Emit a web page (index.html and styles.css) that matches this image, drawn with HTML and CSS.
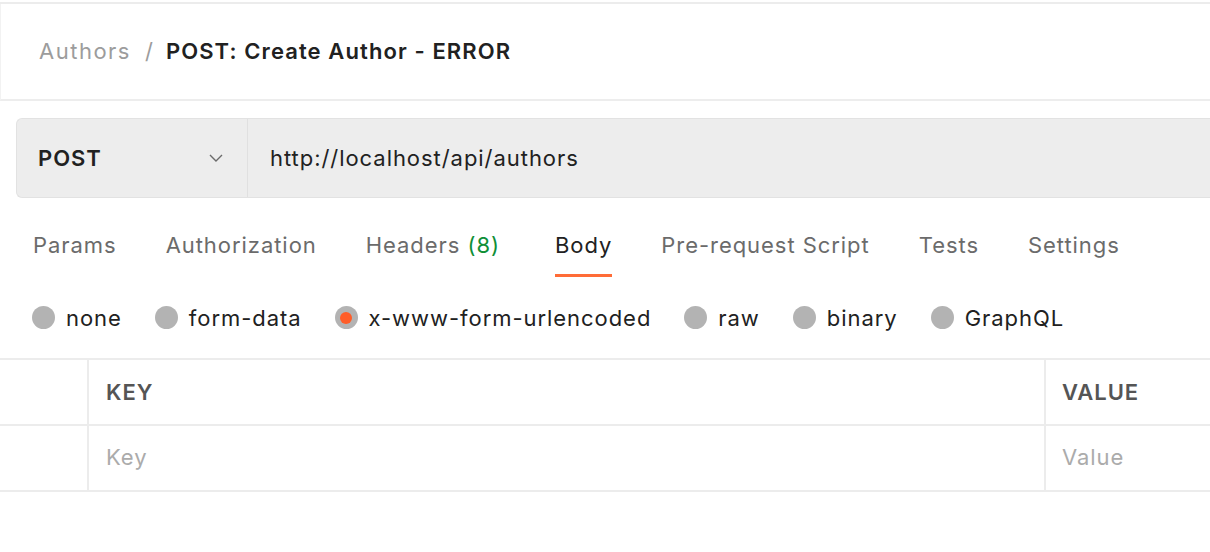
FILE: index.html
```html
<!DOCTYPE html>
<html>
<head>
<meta charset="utf-8">
<link rel="stylesheet" href="styles.css">
</head>
<body>
<div class="page">
  <header class="crumbs">
    <span class="crumb-parent">Authors</span>
    <span class="crumb-sep">/</span>
    <span class="crumb-title">POST: Create Author - ERROR</span>
  </header>
  <div class="request">
    <div class="method">
      <span class="method-name">POST</span>
      <svg class="chev" width="14" height="8" viewBox="0 0 14 8"><path d="M1 1 L7 7 L13 1" fill="none" stroke="#6b6b6b" stroke-width="1.4"/></svg>
    </div>
    <div class="url">http://localhost/api/authors</div>
  </div>
  <nav class="tabs">
    <span class="tab">Params</span>
    <span class="tab">Authorization</span>
    <span class="tab">Headers <span class="count">(8)</span></span>
    <span class="tab active">Body</span>
    <span class="tab">Pre-request Script</span>
    <span class="tab">Tests</span>
    <span class="tab">Settings</span>
  </nav>
  <div class="radios">
    <span class="radio"><span class="dot"></span>none</span>
    <span class="radio"><span class="dot"></span>form-data</span>
    <span class="radio"><span class="dot on"></span>x-www-form-urlencoded</span>
    <span class="radio"><span class="dot"></span>raw</span>
    <span class="radio"><span class="dot"></span>binary</span>
    <span class="radio"><span class="dot"></span>GraphQL</span>
  </div>
  <div class="table">
    <div class="row head">
      <div class="cell check"></div>
      <div class="cell key">KEY</div>
      <div class="cell value">VALUE</div>
    </div>
    <div class="row">
      <div class="cell check"></div>
      <div class="cell key ph">Key</div>
      <div class="cell value ph">Value</div>
    </div>
  </div>
</div>
</body>
</html>
```
FILE: styles.css
```css
* { box-sizing: border-box; }
html, body { margin: 0; padding: 0; background: #fff; }
body {
  font-family: Inter, "Noto Sans", sans-serif;
  font-size: 22px;
  letter-spacing: 0.95px;
  width: 1210px; height: 552px; overflow: hidden;
}
.page {
  border-top: 2px solid #ececec;
  margin-top: 2px;
}
.crumbs {
  height: 97px;
  border-bottom: 2px solid #ededed;
  border-left: 1px solid #f2f2f2;
  display: flex;
  align-items: center;
  padding-left: 38px;
  padding-bottom: 2px;
}
.crumb-parent { color: #9c9c9c; letter-spacing: 1.5px; }
.crumb-sep { color: #9c9c9c; margin: 0 12px 0 14px; }
.crumb-title { color: #212121; font-weight: 600; letter-spacing: 1.1px; }

.request {
  margin: 17px 0 0 16px;
  height: 80px;
  display: flex;
  background: #ededed;
  border: 1px solid #e2e2e2;
  border-right: none;
  border-radius: 6px 0 0 6px;
}
.method {
  width: 231px;
  display: flex;
  align-items: center;
  justify-content: space-between;
  padding: 0 24px 0 21px;
  border-right: 1px solid #e0e0e0;
}
.method-name { font-weight: 600; color: #212121; }
.url {
  display: flex; align-items: center;
  padding-left: 22px;
  color: #212121;
}

.tabs {
  display: flex;
  padding-left: 33px;
  margin-top: 19px;
  height: 60px;
  align-items: flex-start;
}
.tab {
  color: #6b6b6b;
  margin-right: 49px;
  padding-top: 17px;
  padding-bottom: 18px;
  line-height: 22px;
}
.tab:nth-child(3) { margin-right: 55px; }
.tab .count { color: #0f8f37; }
.tab.active { color: #212121; border-bottom: 3px solid #ff6c37; padding-bottom: 18px; }

.radios {
  display: flex;
  align-items: center;
  padding-left: 32px;
  height: 81px;
}
.radio {
  display: flex; align-items: center;
  color: #212121;
  margin-right: 33px;
}
.dot {
  width: 23px; height: 23px; border-radius: 50%;
  background: #b3b3b3;
  margin-right: 11px;
  display: inline-flex; align-items: center; justify-content: center;
}
.dot.on::after {
  content: ""; width: 12px; height: 12px; border-radius: 50%;
  background: #ff5d28;
}
.table {
  border-top: 2px solid #ececec;
}
.row {
  display: flex;
  height: 66px;
  border-bottom: 2px solid #ececec;
}
.cell { display: flex; align-items: center; }
.check { width: 89px; border-right: 2px solid #ececec; }
.key { width: 957px; padding-left: 17px; border-right: 2px solid #ececec; }
.value { flex: 1; padding-left: 16px; }
.head .cell { font-weight: 600; color: #555; }
.ph { color: #ababab; padding-bottom: 2px; }
```
